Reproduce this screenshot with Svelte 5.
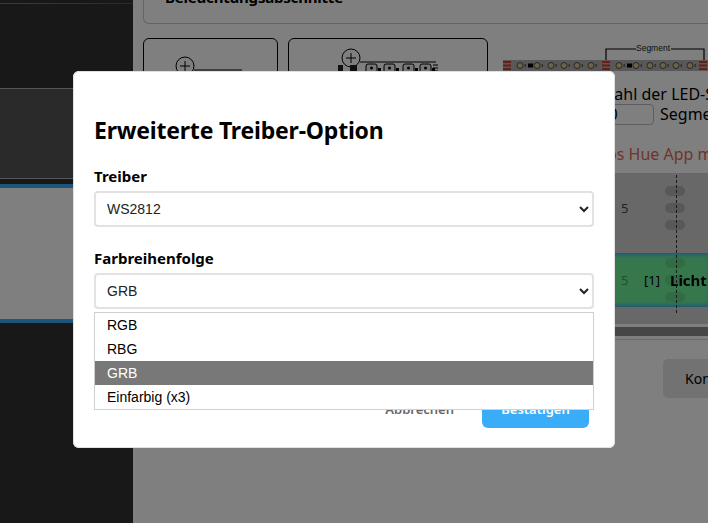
<script>
  let treiber = 'WS2812';
  let farbe = 'GRB';
  const farben = ['RGB', 'RBG', 'GRB', 'Einfarbig (x3)'];
  const ledOffsets = [13, 30, 44, 57, 70, 84];
  const segments = [4, 103];
  const pads = [4, 103, 200];
  const plugs = [0, 18, 37, 54];
</script>

<div class="page">
  <aside class="sidebar">
    <div class="nav-top"></div>
    <div class="nav-item"></div>
    <div class="nav-active"></div>
  </aside>

  <main class="content">
    <section class="card">
      <h3>Beleuchtungsabschnitte</h3>
    </section>

    <div class="setup">
      <div class="tiles">
        <div class="tile small">
          <svg width="135" height="60" viewBox="0 0 135 60">
            <circle cx="42" cy="28" r="9" fill="none" stroke="#000" />
            <path d="M37 28h10M42 23v10M51 32h48M33 34h-3v6" fill="none" stroke="#000" />
          </svg>
        </div>
        <div class="tile wide">
          <svg width="200" height="60" viewBox="0 0 200 60">
            <circle cx="63" cy="20" r="9" fill="none" stroke="#000" />
            <path d="M58 20h10M63 15v10M72 24h76" fill="none" stroke="#000" />
            <path d="M50 27h5v6h-5zM62 27h7v6h-7z" fill="#222" />
            {#each plugs as p}
              <path d="M{78 + p} 34v-6a2 2 0 0 1 2-2h7a2 2 0 0 1 2 2v6z" fill="#eee" stroke="#000" />
              <circle cx={83.500 + p} cy="30" r="1.500" fill="#000" />
              <path d="M{90 + p} 30h3v3h-3z" fill="#000" />
            {/each}
            <path d="M145 27h5M145 30h5M145 33h5" stroke="#000" />
          </svg>
        </div>
      </div>

      <div class="strip-box">
        <svg class="strip" width="205" height="36" viewBox="0 0 205 36">
          <path d="M103 25V14h30M168 14h33v11" fill="none" stroke="#000" stroke-width="1.200" />
          <text x="150" y="16" text-anchor="middle" class="seg-label">Segment</text>
          <rect x="0" y="25" width="205" height="11" fill="#b0b0b0" />
          {#each pads as p}
            <path d="M{p - 4} 27h8M{p - 4} 30.500h8M{p - 4} 34h8" stroke="#d03a2c" stroke-width="2" />
          {/each}
          {#each segments as s}
            {#each ledOffsets as o}
              <circle cx={s + o} cy="30.500" r="3" fill="#d8c98a" stroke="#333" stroke-width="0.800" />
              <rect x={s + o + 4.500} y="29" width="1.500" height="3" fill="#666" />
            {/each}
            <rect x={s + 21} y="28.500" width="5" height="4" fill="#000" />
          {/each}
        </svg>
        <div class="count-title">Auswahl der LED-Segmente</div>
        <div class="count-row">
          <input class="count" value="10" readonly />
          <span>Segmente</span>
        </div>
      </div>
    </div>

    <p class="warning">Die Philips Hue App muss geschlossen sein</p>

    <div class="table">
      <div class="row">
        <span class="num">5</span>
        <span class="idx"></span>
        <span class="handle"><i></i><i></i><i></i></span>
      </div>
      <div class="row selected">
        <span class="num">5</span>
        <span class="idx">[1]</span>
        <span class="handle"><i></i><i></i><i></i></span>
        <b>Licht</b>
      </div>
      <div class="tail"></div>
      <div class="dashes"></div>
    </div>
    <div class="scrollbar"></div>

    <div class="actions">
      <button class="config">Konfigurieren</button>
    </div>
  </main>
</div>

<div class="overlay">
  <div class="modal">
    <h2>Erweiterte Treiber-Option</h2>

    <label for="treiber">Treiber</label>
    <select id="treiber" bind:value={treiber}>
      <option>WS2812</option>
    </select>

    <label for="farbe" class="second">Farbreihenfolge</label>
    <div class="select-wrap">
      <select id="farbe" bind:value={farbe}>
        {#each farben as f}
          <option>{f}</option>
        {/each}
      </select>
      <ul class="listbox">
        {#each farben as f}
          <li class:current={f === farbe}>{f}</li>
        {/each}
      </ul>
    </div>

    <div class="footer">
      <button class="cancel">Abbrechen</button>
      <button class="confirm">Bestätigen</button>
    </div>
  </div>
</div>

<style>
  :global(body) {
    margin: 0;
    font-family: "Noto Sans", sans-serif;
    overflow: hidden;
  }

  .page {
    display: flex;
    width: 708px;
    height: 523px;
    overflow: hidden;
    background: #fff;
    color: #000;
  }

  .sidebar {
    width: 133px;
    flex: none;
    background: #303030;
    display: flex;
    flex-direction: column;
  }
  .nav-top {
    height: 85px;
    margin-top: 3px;
    box-sizing: border-box;
    border-top: 1px solid transparent;
    border-image: linear-gradient(90deg, #777, #555) 1;
  }
  .nav-item {
    height: 91px;
    box-sizing: border-box;
    background: #555;
    border-top: 1px solid #aaa;
    border-bottom: 1px solid #aaa;
  }
  .nav-active {
    height: 139px;
    margin-top: 5px;
    box-sizing: border-box;
    background: #fff;
    border-top: 4px solid #3badf8;
    border-bottom: 4px solid #3badf8;
  }

  .content {
    flex: 1;
    min-width: 0;
    padding-left: 10px;
    display: flex;
    flex-direction: column;
  }

  .card {
    height: 24px;
    flex: none;
    box-sizing: border-box;
    width: 600px;
    border: 1px solid #c8c8c8;
    border-top: none;
    border-radius: 0 0 6px 6px;
    display: flex;
    flex-direction: column;
    justify-content: flex-end;
    padding: 0 21px 16px;
  }
  h3 {
    margin: 0;
    font-size: 15px;
    letter-spacing: -0.2px;
    line-height: 20px;
    font-weight: 700;
    white-space: nowrap;
  }

  .setup {
    display: flex;
    margin-top: 14px;
    gap: 15px;
    height: 112px;
    flex: none;
  }
  .tiles {
    display: flex;
    gap: 10px;
    flex: none;
  }
  .tile {
    height: 90px;
    box-sizing: border-box;
    border: 1px solid #000;
    border-radius: 6px;
  }
  .tile svg {
    display: block;
    margin: -1px;
  }
  .small { width: 135px; }
  .wide { width: 200px; }

  .strip-box {
    flex: none;
    width: 205px;
    margin-top: -3px;
    overflow: hidden;
  }
  .strip { display: block; }
  .seg-label {
    font-family: "Liberation Sans", sans-serif;
    font-size: 8.500px;
    fill: #222;
  }
  .count-title {
    font-size: 16px;
    line-height: 22px;
    margin-top: 12px;
    margin-left: 71px;
    white-space: nowrap;
  }
  .count-row {
    display: flex;
    align-items: center;
    gap: 6px;
    margin-top: -2px;
    margin-left: 60px;
    font-size: 16px;
    white-space: nowrap;
  }
  .count {
    width: 91px;
    height: 21px;
    box-sizing: border-box;
    border: 1px solid #bbb;
    border-radius: 4px;
    background: transparent;
    text-align: center;
    font: inherit;
    padding: 0;
    flex: none;
  }

  .warning {
    margin: -5px 0 0 0;
    height: 19px;
    line-height: 19px;
    font-size: 16px;
    color: #e06a4f;
    white-space: nowrap;
    padding-left: 403px;
  }

  .table {
    margin-top: 9px;
    background: #d0d0d0;
    display: flex;
    flex-direction: column;
    flex: none;
    position: relative;
  }
  .row {
    display: flex;
    align-items: center;
    height: 80px;
    padding: 0 0 10px 478px;
    box-sizing: border-box;
    font-size: 13px;
    position: relative;
    color: #444;
  }
  .row.selected {
    height: 54px;
    padding-bottom: 0;
    background: #6cf098;
    box-shadow: inset 0 4px 4px -2px #3badf8, inset 0 -4px 4px -2px #3badf8;
    color: #000;
  }
  .tail {
    height: 17px;
  }
  .dashes {
    position: absolute;
    left: 533px;
    top: 2px;
    height: 138px;
    border-left: 1px dashed #333;
  }
  .num {
    width: 18px;
  }
  .selected .num { color: #3aa55d; }
  .idx {
    width: 26px;
    text-align: center;
    white-space: nowrap;
  }
  .handle {
    display: flex;
    flex-direction: column;
    align-items: center;
    gap: 7px;
    width: 20px;
    justify-content: center;
  }
  .handle i {
    display: block;
    width: 20px;
    height: 10px;
    border-radius: 5px;
    background: #b0b0b0;
  }
  .selected .handle i { background: #62d88a; }
  .selected b {
    position: absolute;
    left: 527px;
    font-size: 15px;
    z-index: 1;
  }
  .scrollbar {
    height: 9px;
    margin-top: 3px;
    background: #8c8c8c;
    border-bottom: 3px solid #fff;
    box-shadow: 0 1px 0 #d6d6d6;
    flex: none;
  }

  .actions {
    display: flex;
    padding: 20px 0 0 520px;
  }
  .config {
    height: 39px;
    padding: 0 22px;
    border: none;
    border-radius: 5px;
    background: #e4e4e4;
    font: inherit;
    font-size: 14px;
    white-space: nowrap;
    flex: none;
  }

  .overlay {
    position: fixed;
    inset: 0;
    background: rgba(0, 0, 0, 0.5);
  }
  .modal {
    position: absolute;
    left: 73px;
    top: 71px;
    width: 542px;
    height: 377px;
    box-sizing: border-box;
    padding: 41px 21px 20px;
    background: #fff;
    border-radius: 6px;
    box-shadow: inset 0 0 0 1px #e0e0e0;
    display: flex;
    flex-direction: column;
  }
  h2 {
    margin: 0 0 17px;
    font-size: 23px;
    letter-spacing: -0.2px;
    line-height: 36px;
    font-weight: 700;
  }
  label {
    font-size: 15px;
    line-height: 22px;
    font-weight: 700;
    margin-bottom: 4px;
  }
  label.second {
    margin-top: 20px;
  }
  select {
    width: 500px;
    height: 36px;
    box-sizing: border-box;
    padding: 0 7px;
    border: 2px solid #e2e2e2;
    border-radius: 4px;
    background: #fff;
    color: #222;
    font-family: "Liberation Sans", sans-serif;
    font-size: 14px;
    flex: none;
  }
  .select-wrap {
    position: relative;
    height: 36px;
    flex: none;
  }
  .listbox {
    position: absolute;
    left: 0;
    top: 39px;
    width: 500px;
    margin: 0;
    padding: 0;
    box-sizing: border-box;
    list-style: none;
    background: #fff;
    border: 1px solid #d0d0d0;
    font-family: "Liberation Sans", sans-serif;
    font-size: 14px;
    color: #000;
    z-index: 1;
  }
  .listbox li {
    height: 24px;
    line-height: 24px;
    padding-left: 12px;
  }
  .listbox li.current {
    background: #787878;
    color: #fff;
  }
  .footer {
    margin-top: auto;
    display: flex;
    justify-content: flex-end;
    align-items: flex-end;
    padding-right: 5px;
  }
  .footer button {
    height: 39px;
    border: none;
    border-radius: 6px;
    font: inherit;
    font-size: 13px;
    font-weight: 600;
  }
  .cancel {
    padding: 0 28px;
    background: transparent;
    color: #666;
  }
  .confirm {
    width: 107px;
    background: #3badf8;
    color: #fff;
  }
</style>
